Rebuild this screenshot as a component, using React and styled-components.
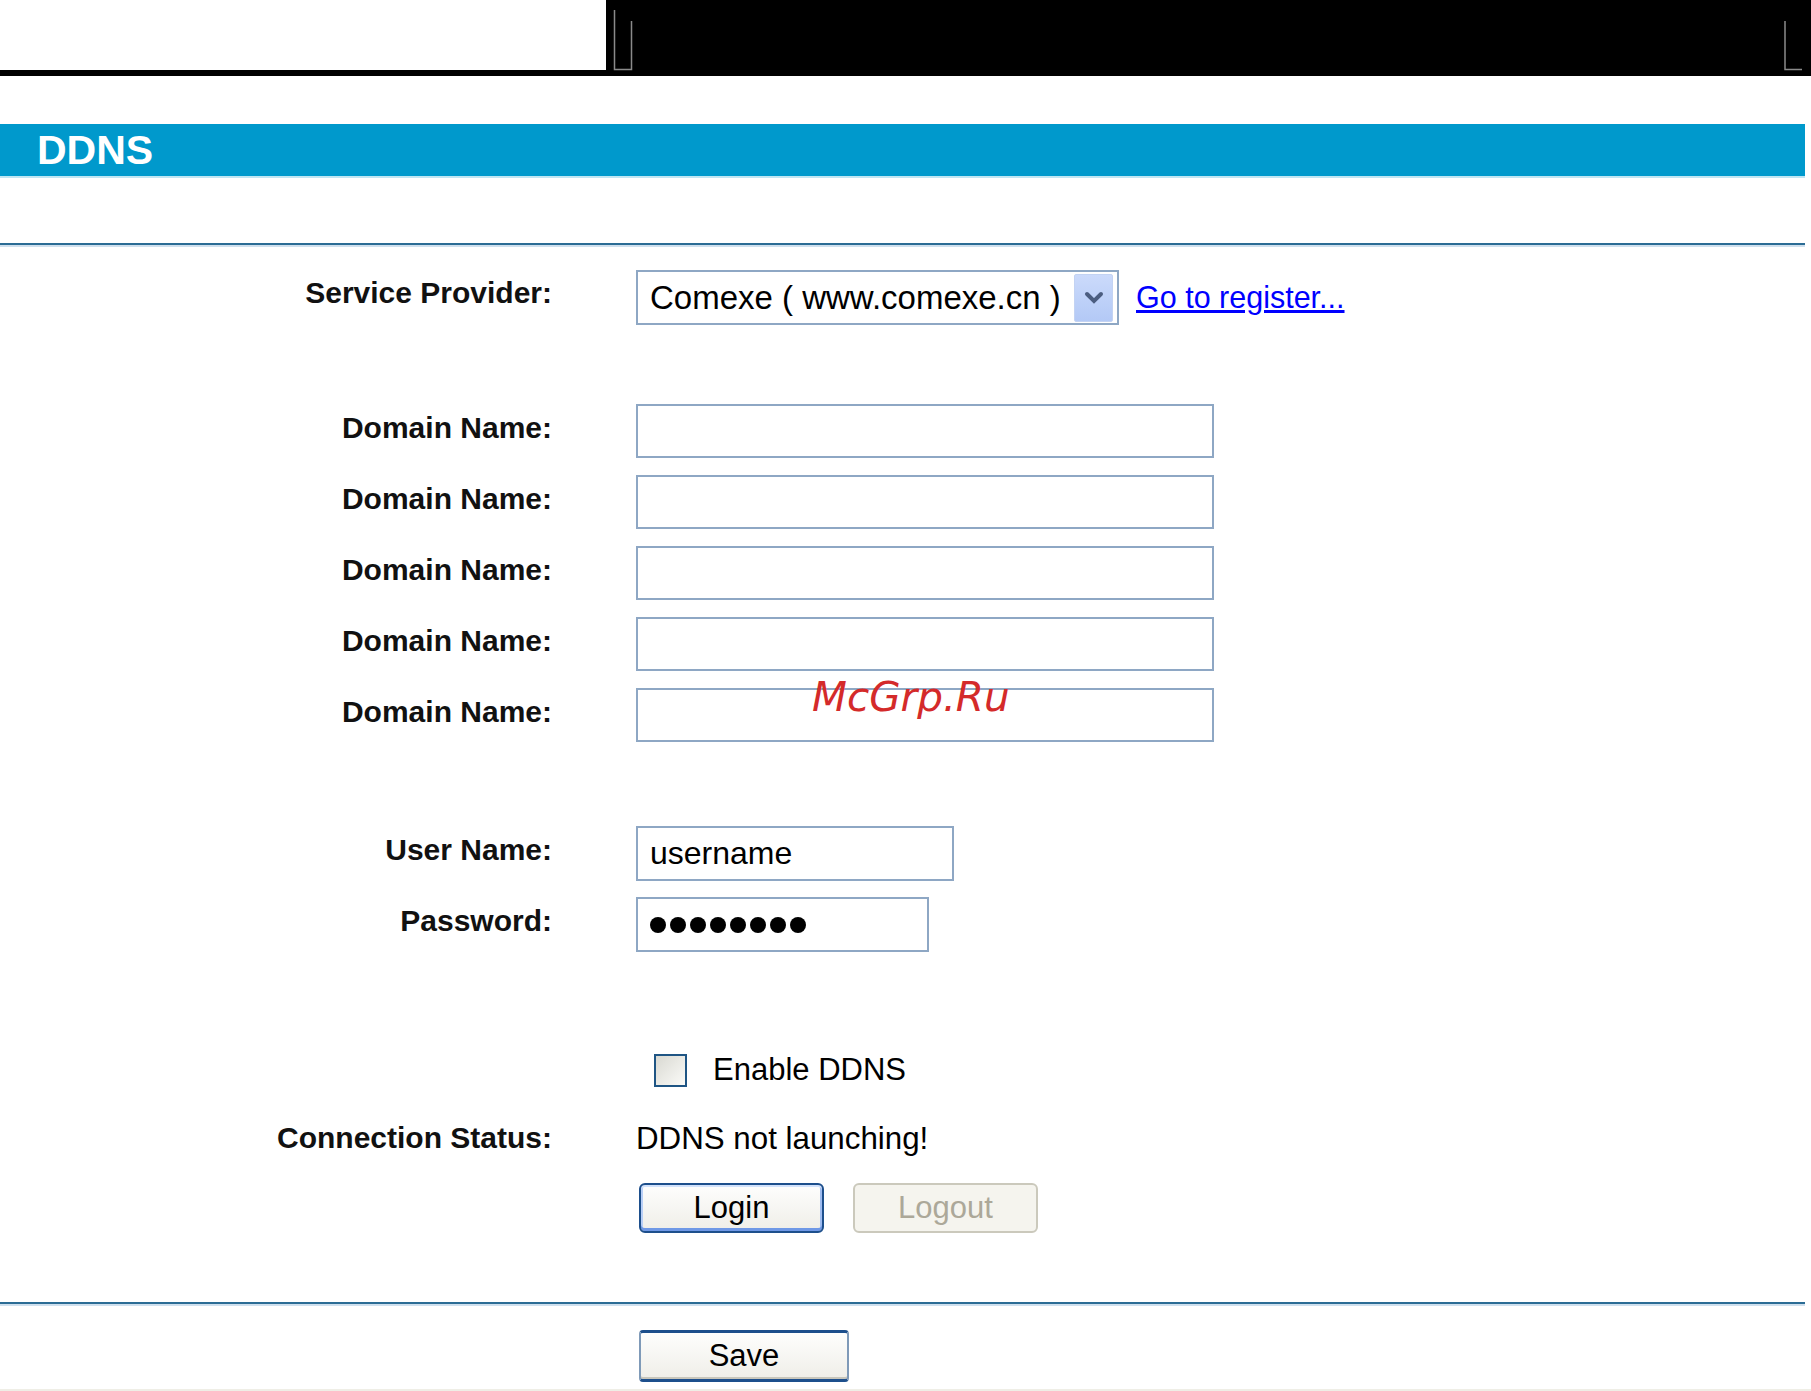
import styled, { createGlobalStyle } from "styled-components";

const GlobalStyle = createGlobalStyle`
    body {
        margin: 0;
        background: #ffffff;
        font-family: "Liberation Sans", Arial, sans-serif;
        color: #000;
    }
`;

const Page = styled.div`
    position: relative;
    width: 1811px;
    height: 1391px;
    overflow: hidden;
    background: #fff;
`;

const TopBand = styled.div`
    height: 76px;
    background: #000;
    display: flex;
    align-items: flex-start;
`;

const TopWhite = styled.div`
    width: 606px;
    height: 70px;
    background: #fff;
`;

const Content = styled.div`
    width: 1805px;
    padding-top: 48px;
`;

const TitleBar = styled.div`
    height: 52px;
    background: #0099cc;
    border-bottom: 2px solid #bfe6f3;
    display: flex;
    align-items: center;
    padding-left: 37px;
    color: #fff;
    font-weight: 700;
    font-size: 41px;
`;

const Rule = styled.div`
    margin-top: ${p => p.$top}px;
    height: 2px;
    background: #2b6c95;
    border-bottom: 2px solid #cfe0ee;
`;

const Row = styled.div`
    display: grid;
    grid-template-columns: 552px auto;
    column-gap: 84px;
    align-items: center;
    margin-top: ${p => p.$top}px;
    height: ${p => p.$h}px;
`;

const Label = styled.div`
    text-align: right;
    font-weight: 700;
    font-size: 30px;
    color: #111;
    padding-bottom: ${p => p.$lift ?? 6}px;
`;

const Cell = styled.div`
    display: flex;
    align-items: center;
    height: 100%;
`;

const Select = styled.div`
    box-sizing: border-box;
    width: 483px;
    height: 55px;
    border: 2px solid #8ea7c4;
    display: flex;
    align-items: center;
    justify-content: space-between;
    padding: 0 4px 0 12px;
    font-size: 33px;
    background: #fff;
`;

const SelectArrow = styled.div`
    width: 37px;
    height: 46px;
    border-radius: 2px;
    border: 1px solid #c3d3f3;
    background: linear-gradient(#cbdafb, #b3c9f6);
    display: flex;
    align-items: center;
    justify-content: center;
`;

const RegisterLink = styled.a`
    margin-left: 17px;
    color: #0000ff;
    font-size: 30.5px;
    text-decoration: underline;
    cursor: pointer;
`;

const TextBox = styled.div`
    box-sizing: border-box;
    width: ${p => p.$w}px;
    height: 100%;
    border: 2px solid #8ea7c4;
    background: #fff;
    display: flex;
    align-items: center;
    padding-left: 12px;
    font-size: 32px;
`;

const Dots = styled.div`
    display: flex;
    gap: 4px;
`;

const Dot = styled.span`
    width: 16px;
    height: 16px;
    border-radius: 50%;
    background: #000;
`;

const Check = styled.span`
    box-sizing: border-box;
    width: 33px;
    height: 33px;
    margin-left: 18px;
    border: 2px solid #1f5584;
    background: linear-gradient(135deg, #d9d9d2, #fbfbf8);
`;

const CheckText = styled.span`
    margin-left: 26px;
    font-size: 31px;
`;

const Plain = styled.span`
    font-size: 31.3px;
`;

const Buttons = styled.div`
    display: flex;
    gap: 29px;
    margin-left: 3px;
    height: 100%;
`;

const Button = styled.button`
    box-sizing: border-box;
    width: ${p => p.$w}px;
    height: 100%;
    font-family: "Liberation Sans", Arial, sans-serif;
    font-size: 31px;
    padding: 0;
    border-radius: 6px;
    color: ${p => (p.disabled ? "#aca899" : "#000")};
    border: 2px solid ${p => (p.disabled ? "#cbc9bc" : "#1d4f8c")};
    background: ${p => (p.disabled ? "#f5f4ee" : "linear-gradient(#fefefd, #efeee8)")};
    box-shadow: ${p => (p.disabled ? "none" : "inset 0 2px 0 #d2e2fb, inset 0 -3px 0 #6f98e6, inset 2px 0 0 #b9cff6, inset -2px 0 0 #9fbcf0")};
`;

const SaveButton = styled(Button)`
    border-radius: 4px;
    border-width: 3px 2px;
    border-color: #1d4f8c #7f9ab8;
    box-shadow: inset 0 -2px 0 #c8c6bb;
    margin-left: 3px;
`;

const BottomStrip = styled.div`
    margin-top: 7px;
    height: 4px;
    width: 1811px;
    background: #efeee6;
`;

const Watermark = styled.div`
    position: absolute;
    left: 812px;
    top: 677px;
    font-family: "DejaVu Sans", sans-serif;
    font-style: italic;
    font-size: 40.5px;
    line-height: 1;
    color: #d42a2a;
`;

const Brackets = () => (
    <svg width="1205" height="76" viewBox="0 0 1205 76">
        <g stroke="#8a8a8a" strokeWidth="1.5" fill="none">
            <path d="M8.5 10 V69.5 H25.5 V21" />
            <path d="M1179 21 V69.5 H1196" />
        </g>
    </svg>
);

const Chevron = () => (
    <svg width="20" height="14" viewBox="0 0 20 14">
        <path d="M3 3 L10 10 L17 3" stroke="#4b5d80" strokeWidth="4" fill="none" strokeLinecap="round" />
    </svg>
);

const domains = [0, 1, 2, 3, 4];

const App = () => {
    return (
        <Page>
            <GlobalStyle />
            <TopBand>
                <TopWhite />
                <Brackets />
            </TopBand>
            <Content>
                <TitleBar>DDNS</TitleBar>
                <Rule $top={65} />

                <Row $top={23} $h={55}>
                    <Label $lift={10}>Service Provider:</Label>
                    <Cell>
                        <Select>
                            <span>Comexe ( www.comexe.cn )</span>
                            <SelectArrow>
                                <Chevron />
                            </SelectArrow>
                        </Select>
                        <RegisterLink>Go to register...</RegisterLink>
                    </Cell>
                </Row>

                {domains.map((d) => (
                    <Row key={d} $top={d === 0 ? 79 : 17} $h={54}>
                        <Label>Domain Name:</Label>
                        <Cell>
                            <TextBox $w={578} />
                        </Cell>
                    </Row>
                ))}

                <Row $top={84} $h={55}>
                    <Label $lift={8}>User Name:</Label>
                    <Cell>
                        <TextBox $w={318}>username</TextBox>
                    </Cell>
                </Row>
                <Row $top={16} $h={55}>
                    <Label $lift={8}>Password:</Label>
                    <Cell>
                        <TextBox $w={293}>
                            <Dots>
                                {[0, 1, 2, 3, 4, 5, 6, 7].map((i) => (
                                    <Dot key={i} />
                                ))}
                            </Dots>
                        </TextBox>
                    </Cell>
                </Row>

                <Row $top={100} $h={33}>
                    <Label />
                    <Cell>
                        <Check />
                        <CheckText>Enable DDNS</CheckText>
                    </Cell>
                </Row>

                <Row $top={34} $h={40}>
                    <Label $lift={2}>Connection Status:</Label>
                    <Cell>
                        <Plain>DDNS not launching!</Plain>
                    </Cell>
                </Row>

                <Row $top={24} $h={50}>
                    <Label />
                    <Buttons>
                        <Button $w={185}>Login</Button>
                        <Button $w={185} disabled>Logout</Button>
                    </Buttons>
                </Row>

                <Rule $top={69} />

                <Row $top={24} $h={52}>
                    <Label />
                    <Cell>
                        <SaveButton $w={210}>Save</SaveButton>
                    </Cell>
                </Row>
            </Content>
            <BottomStrip />
            <Watermark>McGrp.Ru</Watermark>
        </Page>
    );
};

export default App;
